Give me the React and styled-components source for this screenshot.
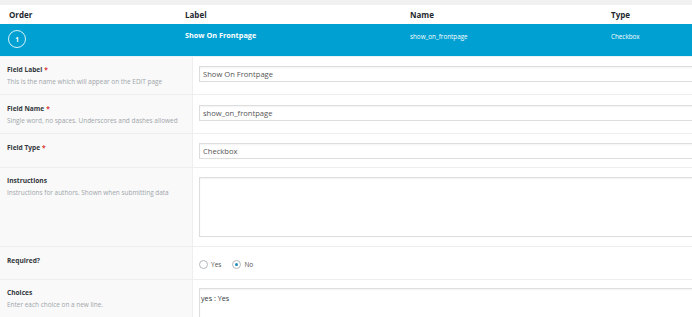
import React from "react";
import styled, { createGlobalStyle } from "styled-components";

const GlobalStyle = createGlobalStyle`
  html, body {
    margin: 0;
    padding: 0;
    background: #f1f1f1;
    font-family: "Open Sans", "Liberation Sans", sans-serif;
    overflow: hidden;
  }
`;

const Page = styled.div`
  width: 692px;
  height: 317px;
  padding-top: 5px;
  box-sizing: border-box;
  overflow: hidden;
`;

const Panel = styled.div`
  background: #fff;
`;

const HeadRow = styled.div`
  display: grid;
  grid-template-columns: 176px 225px 201px 1fr;
  align-items: center;
  height: 19px;
  padding-left: 9px;
  font-size: 8px;
  font-weight: 700;
  color: #23282d;
  background: #fff;
`;

const ActiveRow = styled.div`
  display: grid;
  grid-template-columns: 176px 225px 201px 1fr;
  align-items: start;
  height: 32px;
  padding-left: 9px;
  box-sizing: border-box;
  background: #00a0d2;
  color: #fff;
`;

const OrderBadge = styled.div`
  margin-top: 6px;
  margin-left: -1px;
  width: 18px;
  height: 18px;
  border: 1px solid rgba(255, 255, 255, 0.85);
  border-radius: 50%;
  box-sizing: border-box;
  display: flex;
  align-items: center;
  justify-content: center;
  font-size: 6.5px;
  font-weight: 700;
`;

const Cell = styled.div`
  padding-top: ${(p) => p.$top || 7}px;
  font-size: ${(p) => (p.$bold ? 7.3 : 6.3)}px;
  font-weight: ${(p) => (p.$bold ? 700 : 400)};
  white-space: nowrap;
`;

const Fields = styled.div`
  border-top: 1px solid #e6f3f9;
  background: #fff;
`;

const Row = styled.div`
  display: grid;
  grid-template-columns: 193px 1fr;
  border-top: 1px solid #eeeeee;
  &:first-child {
    border-top: none;
  }
`;

const LabelCell = styled.div`
  background: #f9f9f9;
  border-right: 1px solid #eeeeee;
  padding: ${(p) => p.$top || 10}px 7px ${(p) => p.$bottom || 6}px;
`;

const LabelText = styled.div`
  font-size: 6.6px;
  font-weight: 700;
  color: #32373c;
  line-height: 10px;
`;

const Star = styled.span`
  color: #dc3232;
  margin-left: 2px;
`;

const Desc = styled.div`
  font-size: 6.45px;
  color: #a0a5aa;
  line-height: 10px;
  margin-top: 2px;
`;

const InputCell = styled.div`
  padding: ${(p) => p.$top || 9}px 0 ${(p) => p.$bottom || 8}px 6px;
  display: flex;
  align-items: flex-start;
`;

const TextInput = styled.div`
  width: 520px;
  height: 16px;
  box-sizing: border-box;
  border: 1px solid #dddddd;
  box-shadow: inset 0 1px 2px rgba(0, 0, 0, 0.05);
  background: #fff;
  padding: 0 3px;
  font-size: 7.6px;
  color: #555;
  display: flex;
  align-items: center;
`;

const TextArea = styled.div`
  width: 520px;
  height: ${(p) => p.$height}px;
  box-sizing: border-box;
  border: 1px solid #dddddd;
  box-shadow: inset 0 1px 2px rgba(0, 0, 0, 0.05);
  background: #fff;
  padding: 4px 1px;
  font-size: 7.2px;
  color: #32373c;
`;

const RadioGroup = styled.div`
  display: flex;
  align-items: center;
  gap: 11px;
  margin-top: 4px;
`;

const RadioOption = styled.label`
  display: flex;
  align-items: center;
  gap: 3px;
  font-size: 6.5px;
  color: #555;
`;

const RadioDot = styled.span`
  width: 9px;
  height: 9px;
  border: 1px solid #b4b9be;
  border-radius: 50%;
  box-sizing: border-box;
  background: #fff;
  display: flex;
  align-items: center;
  justify-content: center;
  &::after {
    content: "";
    width: 3px;
    height: 3px;
    border-radius: 50%;
    background: ${(p) => (p.$checked ? "#1e8cbe" : "transparent")};
  }
`;

const Radio = ({ checked, children }) => (
  <RadioOption>
    <RadioDot $checked={checked} />
    {children}
  </RadioOption>
);

const App = () => {
  return (
    <Page>
      <GlobalStyle />
      <Panel>
        <HeadRow>
          <span>Order</span>
          <span>Label</span>
          <span>Name</span>
          <span>Type</span>
        </HeadRow>
        <ActiveRow>
          <OrderBadge>1</OrderBadge>
          <Cell $bold $top={6}>Show On Frontpage</Cell>
          <Cell $top={8}>show_on_frontpage</Cell>
          <Cell $top={8}>Checkbox</Cell>
        </ActiveRow>
        <Fields>
          <Row>
            <LabelCell $top={8} $bottom={7}>
              <LabelText>
                Field Label<Star>*</Star>
              </LabelText>
              <Desc>This is the name which will appear on the EDIT page</Desc>
            </LabelCell>
            <InputCell $top={9} $bottom={4}>
              <TextInput>Show On Frontpage</TextInput>
            </InputCell>
          </Row>
          <Row>
            <LabelCell $top={9} $bottom={7}>
              <LabelText>
                Field Name<Star>*</Star>
              </LabelText>
              <Desc>Single word, no spaces. Underscores and dashes allowed</Desc>
            </LabelCell>
            <InputCell $top={10} $bottom={4}>
              <TextInput>show_on_frontpage</TextInput>
            </InputCell>
          </Row>
          <Row>
            <LabelCell $top={9} $bottom={4}>
              <LabelText>
                Field Type<Star>*</Star>
              </LabelText>
            </LabelCell>
            <InputCell $top={9} $bottom={8}>
              <TextInput>Checkbox</TextInput>
            </InputCell>
          </Row>
          <Row>
            <LabelCell $top={8} $bottom={4}>
              <LabelText>Instructions</LabelText>
              <Desc>Instructions for authors. Shown when submitting data</Desc>
            </LabelCell>
            <InputCell $top={9} $bottom={9}>
              <TextArea $height={60} />
            </InputCell>
          </Row>
          <Row>
            <LabelCell $top={9} $bottom={4}>
              <LabelText>Required?</LabelText>
            </LabelCell>
            <InputCell $top={9} $bottom={10}>
              <RadioGroup>
                <Radio>Yes</Radio>
                <Radio checked>No</Radio>
              </RadioGroup>
            </InputCell>
          </Row>
          <Row>
            <LabelCell $top={8} $bottom={6}>
              <LabelText>Choices</LabelText>
              <Desc>Enter each choice on a new line.</Desc>
            </LabelCell>
            <InputCell $top={8}>
              <TextArea $height={60}>yes : Yes</TextArea>
            </InputCell>
          </Row>
        </Fields>
      </Panel>
    </Page>
  );
};

export default App;
